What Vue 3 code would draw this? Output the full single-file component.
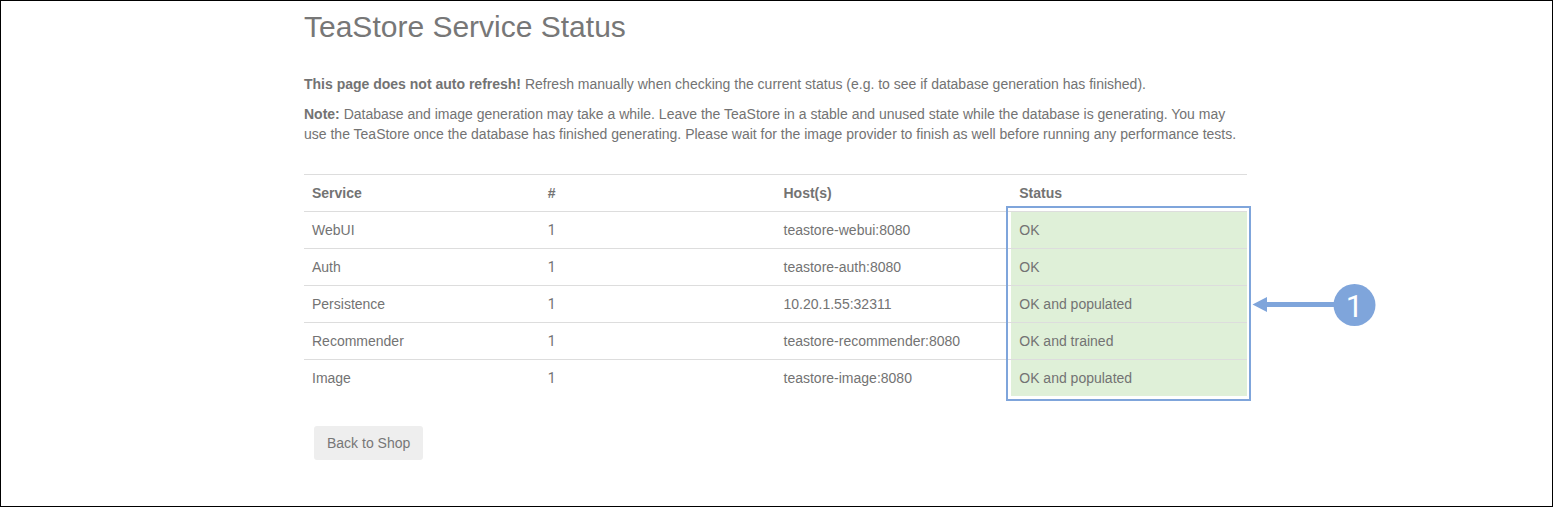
<script setup>
const rows = [
  { service: 'WebUI', count: 1, host: 'teastore-webui:8080', status: 'OK' },
  { service: 'Auth', count: 1, host: 'teastore-auth:8080', status: 'OK' },
  { service: 'Persistence', count: 1, host: '10.20.1.55:32311', status: 'OK and populated' },
  { service: 'Recommender', count: 1, host: 'teastore-recommender:8080', status: 'OK and trained' },
  { service: 'Image', count: 1, host: 'teastore-image:8080', status: 'OK and populated' },
]
</script>

<template>
  <div class="frame">
    <main class="page">
      <h2 class="title">TeaStore Service Status</h2>
      <p class="lead"><b>This page does not auto refresh!</b> Refresh manually when checking the current status (e.g. to see if database generation has finished).</p>
      <p class="note"><b>Note:</b> Database and image generation may take a while. Leave the TeaStore in a stable and unused state while the database is generating. You may use the TeaStore once the database has finished generating. Please wait for the image provider to finish as well before running any performance tests.</p>
      <div class="table-wrap">
        <table class="status-table">
          <thead>
            <tr>
              <th>Service</th>
              <th>#</th>
              <th>Host(s)</th>
              <th>Status</th>
            </tr>
          </thead>
          <tbody>
            <tr v-for="row in rows" :key="row.service">
              <td>{{ row.service }}</td>
              <td class="count">{{ row.count }}</td>
              <td>{{ row.host }}</td>
              <td class="ok">{{ row.status }}</td>
            </tr>
          </tbody>
        </table>
        <div class="highlight"></div>
        <svg class="callout" width="126" height="42" viewBox="0 0 126 42">
          <path d="M1.5 20.5 L16 13 V18 H90 V23 H16 V28 Z" fill="#7FA5DB" />
          <circle cx="103.5" cy="21" r="21" fill="#7FA5DB" />
          <text x="103.5" y="32.5" text-anchor="middle" class="callout-num">1</text>
        </svg>
      </div>
      <a class="back">Back to Shop</a>
    </main>
  </div>
</template>

<style>
html, body { margin: 0; background: #fff; }
</style>

<style scoped>
.frame {
  box-sizing: border-box;
  width: 1553px;
  height: 507px;
  border: 1px solid #000;
  background: #fff;
  overflow: hidden;
  font-family: "Liberation Sans", Arial, sans-serif;
  font-size: 14px;
  line-height: 20px;
  color: #737373;
}
.page {
  width: 944px;
  margin-left: 303px;
}
.title {
  margin: 0;
  padding-top: 9px;
  font-size: 30px;
  line-height: 33px;
  font-weight: 400;
  color: #777;
}
.lead { margin: 31px 0 0; }
.note { margin: 10px 0 0; }
.table-wrap {
  position: relative;
  margin-top: 30px;
}
.status-table {
  width: 943px;
  table-layout: fixed;
  border-collapse: collapse;
  border-top: 1px solid #ddd;
}
.status-table th {
  height: 36px;
  padding: 0 8px;
  text-align: left;
  font-weight: 700;
  border-bottom: 1px solid #ddd;
}
.status-table td {
  height: 36px;
  padding: 0 8px;
  border-top: 1px solid #ddd;
}
.status-table tbody tr:first-child td { border-top: 0; }
.status-table .count { font-family: Roboto, "Liberation Sans", sans-serif; }
.status-table .ok { background: #dff0d8; }
.highlight {
  position: absolute;
  left: 702px;
  top: 32px;
  width: 245px;
  height: 195px;
  box-sizing: border-box;
  border: 2px solid #7FA5DB;
}
.callout {
  position: absolute;
  left: 947px;
  top: 110px;
}
.callout-num {
  font-family: Roboto, "Liberation Sans", sans-serif;
  font-size: 31px;
  fill: #fff;
}
.back {
  display: inline-block;
  margin: 30px 0 0 10px;
  padding: 7px 13px;
  background: #eee;
  border-radius: 3px;
  color: #777;
}
</style>
